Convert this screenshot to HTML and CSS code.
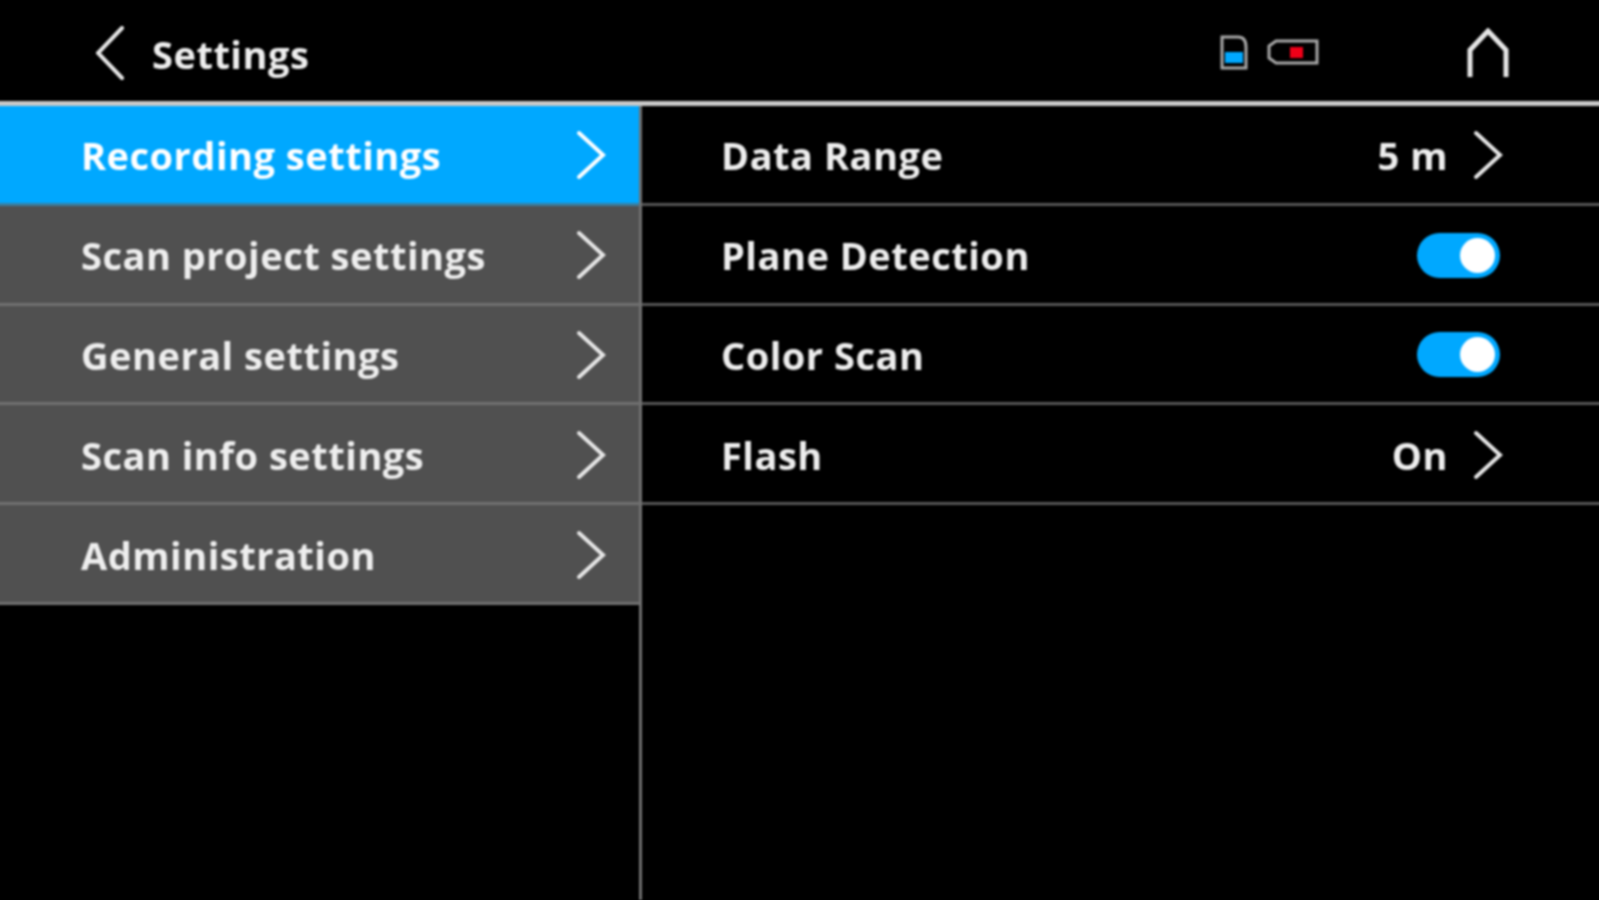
FILE: index.html
```html
<!DOCTYPE html>
<html lang="en">
<head>
<meta charset="utf-8">
<title>Settings</title>
<link rel="stylesheet" href="styles.css">
</head>
<body>
<div class="screen">
  <header class="topbar">
    <div class="title-group">
      <svg class="back" viewBox="0 0 30 54"><path d="M26 2 2 27 26 52"/></svg>
      <span class="title">Settings</span>
    </div>
    <div class="status">
      <svg class="sd" viewBox="0 0 30 36"><path class="outline" d="M3 2H19Q27 2 27 12V33H3Z"/><rect class="sd-fill" x="6" y="17" width="18" height="11"/></svg>
      <svg class="battery" viewBox="0 0 54 26"><path class="outline" d="M10 2H51V24H10L3 19V7Z"/><rect class="battery-fill" x="24" y="8" width="13" height="11"/></svg>
      <svg class="home" viewBox="0 0 42 50"><path d="M3 49V22L21 3 39 22V49"/></svg>
    </div>
  </header>
  <main class="panes">
    <nav class="menu">
      <div class="menu-item active"><span>Recording settings</span><svg class="chev" viewBox="0 0 30 50"><path d="M3 3 27 25 3 47"/></svg></div>
      <div class="menu-item"><span>Scan project settings</span><svg class="chev" viewBox="0 0 30 50"><path d="M3 3 27 25 3 47"/></svg></div>
      <div class="menu-item"><span>General settings</span><svg class="chev" viewBox="0 0 30 50"><path d="M3 3 27 25 3 47"/></svg></div>
      <div class="menu-item"><span>Scan info settings</span><svg class="chev" viewBox="0 0 30 50"><path d="M3 3 27 25 3 47"/></svg></div>
      <div class="menu-item"><span>Administration</span><svg class="chev" viewBox="0 0 30 50"><path d="M3 3 27 25 3 47"/></svg></div>
    </nav>
    <section class="options">
      <div class="option"><span>Data Range</span><div class="value"><span>5 m</span><svg class="chev" viewBox="0 0 30 50"><path d="M3 3 27 25 3 47"/></svg></div></div>
      <div class="option"><span>Plane Detection</span><div class="toggle"><div class="knob"></div></div></div>
      <div class="option"><span>Color Scan</span><div class="toggle"><div class="knob"></div></div></div>
      <div class="option"><span>Flash</span><div class="value"><span>On</span><svg class="chev" viewBox="0 0 30 50"><path d="M3 3 27 25 3 47"/></svg></div></div>
    </section>
  </main>
</div>
</body>
</html>
```
FILE: styles.css
```css
* { box-sizing: border-box; }
html, body { margin: 0; padding: 0; background: #000; overflow: hidden; }
body { font-family: "Open Sans", "Liberation Sans", sans-serif; font-weight: 700; font-size: 38px; letter-spacing: 0.5px; color: #eee; }
.screen { width: 1607px; height: 900px; margin-left: -4px; overflow: hidden; display: flex; flex-direction: column; filter: blur(0.8px); background: #000; }
.topbar { height: 106px; flex: none; display: flex; justify-content: space-between; align-items: center; border-bottom: 5px solid #c8c8c8; padding: 4px 94px 0 100px; }
.title-group { display: flex; align-items: center; gap: 26px; }
.title { margin-top: 3px; }
.back { width: 30px; height: 54px; }
svg path { fill: none; stroke: #e6e6e6; stroke-width: 4; stroke-linecap: round; stroke-linejoin: miter; }
.status { display: flex; align-items: center; }
.sd { width: 30px; height: 36px; margin-right: 17px; }
.battery { width: 54px; height: 26px; margin-right: 147px; margin-top: -2px; }
.outline { stroke: #a8a8a8; stroke-width: 3; }
.sd-fill { fill: #00a8ff; }
.battery-fill { fill: #f00018; }
.home { width: 42px; height: 50px; }
.home path { stroke-linecap: butt; stroke-width: 5; }
.panes { flex: 1; display: flex; min-height: 0; }
.menu { width: 646px; flex: none; border-right: 3px solid #707070; }
.menu-item { height: 99.8px; display: flex; justify-content: space-between; align-items: center; padding: 2px 33px 0 85px; background: #505050; border-bottom: 3px solid #707070; }
.menu-item.active { background: #00a8ff; border-bottom-color: #3a7ea0; color: #fff; }
.chev { width: 30px; height: 50px; }
.active .chev path { stroke: #fff; }
.options { flex: 1; }
.option { height: 99.8px; display: flex; justify-content: space-between; align-items: center; padding: 2px 103px 0 79px; border-bottom: 3px solid #555; }
.value { display: flex; align-items: center; gap: 25px; margin-right: -3px; }
.toggle { width: 83px; height: 45px; border-radius: 23px; background: #00a8ff; display: flex; align-items: center; justify-content: flex-end; padding-right: 5px; }
.knob { width: 35px; height: 35px; border-radius: 50%; background: #fff; }
```
